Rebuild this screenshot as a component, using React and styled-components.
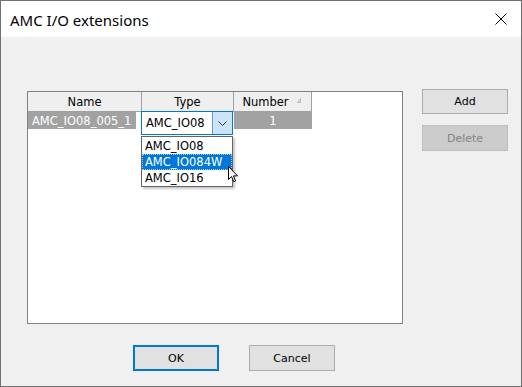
import React from "react";
import styled, { createGlobalStyle } from "styled-components";

const GlobalStyle = createGlobalStyle`
  html, body { margin: 0; padding: 0; background: #ffffff; }
  * { box-sizing: border-box; }
`;

const Frame = styled.div`
  width: 522px;
  height: 387px;
  border: 1px solid #707070;
  display: flex;
  flex-direction: column;
  font-family: "DejaVu Sans", sans-serif;
  font-size: 11.5px;
  color: #000;
  overflow: hidden;
`;

const TitleBar = styled.div`
  height: 36px;
  background: #fff;
  display: flex;
  align-items: center;
  justify-content: space-between;
  padding: 0 14px 0 9px;
`;

const Title = styled.div`
  font-family: "Noto Sans", sans-serif;
  font-size: 15px;
  padding-top: 1px;
`;

const Body = styled.div`
  flex: 1;
  background: #f0f0f0;
  padding: 52px 10px 0 26px;
  display: flex;
  flex-direction: column;
`;

const MainRow = styled.div`
  display: flex;
  align-items: flex-start;
  gap: 19px;
`;

const Grid = styled.div`
  position: relative;
  margin-top: 2px;
  width: 376px;
  height: 233px;
  background: #fff;
  border: 1px solid #828282;
`;

const HeaderRow = styled.div`
  display: flex;
  height: 20px;
`;

const HeaderCell = styled.div`
  position: relative;
  width: ${p => p.$w}px;
  background: #efefef;
  border-right: 1px solid #a0a0a0;
  border-bottom: 1px solid #a0a0a0;
  display: flex;
  align-items: center;
  justify-content: center;
  padding-top: 1px;
  padding-right: ${p => p.$padRight || 0}px;
`;

const HeaderFill = styled.div`
  flex: 1;
  background: #fff;
`;

const SortMark = styled.svg`
  position: absolute;
  right: 9px;
  top: 6px;
`;

const DataRow = styled.div`
  display: flex;
  height: 17px;
`;

const Cell = styled.div`
  width: ${p => p.$w}px;
  background: ${p => (p.$selected ? "#a2a2a2" : "transparent")};
  color: #fff;
  display: flex;
  align-items: center;
  justify-content: ${p => (p.$center ? "center" : "flex-start")};
  padding-left: ${p => (p.$center ? 0 : 4)}px;
  white-space: nowrap;
`;

const Combo = styled.div`
  position: absolute;
  left: 113px;
  top: 19px;
  width: 92px;
  height: 24px;
  background: #fff;
  border: 1px solid #0078d7;
  display: flex;
`;

const ComboText = styled.div`
  flex: 1;
  display: flex;
  align-items: center;
  padding-left: 4px;
`;

const ComboButton = styled.div`
  width: 20px;
  background: #cce4f7;
  border-left: 1px solid #5a9fdc;
  display: flex;
  align-items: center;
  justify-content: center;
`;

const List = styled.div`
  position: absolute;
  left: 113px;
  top: 44px;
  width: 92px;
  height: 51px;
  background: #fff;
  border: 1px solid #646464;
  padding-top: 1px;
  box-shadow: 2px 2px 2px rgba(0, 0, 0, 0.22);
`;

const ListItem = styled.div`
  height: 16px;
  display: flex;
  align-items: center;
  padding-left: 3px;
  background: ${p => (p.$active ? "#0078d7" : "transparent")};
  color: ${p => (p.$active ? "#fff" : "#000")};
  outline: ${p => (p.$active ? "1px dotted #9cc8ef" : "none")};
  outline-offset: -1px;
  white-space: nowrap;
`;

const Cursor = styled.svg`
  position: absolute;
  left: 200px;
  top: 74px;
`;

const SideButtons = styled.div`
  width: 86px;
  display: flex;
  flex-direction: column;
  gap: 11px;
`;

const Button = styled.div`
  width: 86px;
  height: ${p => p.$h || 25}px;
  font-size: 11px;
  display: flex;
  align-items: center;
  justify-content: center;
  background: ${p => (p.$disabled ? "#cccccc" : "#e1e1e1")};
  color: ${p => (p.$disabled ? "#838383" : "#000")};
  border: ${p =>
    p.$default ? "2px solid #0078d7" : p.$disabled ? "1px solid #bfbfbf" : "1px solid #adadad"};
`;

const Footer = styled.div`
  display: flex;
  gap: 30px;
  margin-top: 21px;
  padding-left: 106px;
`;

function App() {
  return (
    <>
      <GlobalStyle />
      <Frame>
        <TitleBar>
          <Title>AMC I/O extensions</Title>
          <svg width="12" height="12" viewBox="0 0 12 12">
            <path d="M0.5 0.5 L11.5 11.5 M11.5 0.5 L0.5 11.5" stroke="#000" strokeWidth="1" fill="none" />
          </svg>
        </TitleBar>
        <Body>
          <MainRow>
            <Grid>
              <HeaderRow>
                <HeaderCell $w={114}>Name</HeaderCell>
                <HeaderCell $w={92}>Type</HeaderCell>
                <HeaderCell $w={78} $padRight={14}>
                  Number
                  <SortMark width="5" height="5" viewBox="0 0 5 5">
                    <path d="M0.5 4.5 L3.5 0.5 L3.5 4.5 Z" stroke="#b8b8b8" fill="none" />
                  </SortMark>
                </HeaderCell>
                <HeaderFill />
              </HeaderRow>
              <DataRow>
                <Cell $w={108} $selected>AMC_IO08_005_1</Cell>
                <Cell $w={98} />
                <Cell $w={78} $selected $center>1</Cell>
              </DataRow>
              <Combo>
                <ComboText>AMC_IO08</ComboText>
                <ComboButton>
                  <svg width="9" height="5" viewBox="0 0 9 5">
                    <path d="M0.5 0.5 L4.5 4.5 L8.5 0.5" stroke="#333" fill="none" />
                  </svg>
                </ComboButton>
              </Combo>
              <List>
                <ListItem>AMC_IO08</ListItem>
                <ListItem $active>AMC_IO084W</ListItem>
                <ListItem>AMC_IO16</ListItem>
              </List>
              <Cursor width="11" height="17" viewBox="0 0 11 17">
                <path
                  d="M0.5 0.5 L0.5 13.5 L3.5 10.5 L5.8 15.8 L7.6 15 L5.4 9.9 L9.5 9.9 Z"
                  fill="#fff"
                  stroke="#000"
                  strokeWidth="1"
                  strokeLinejoin="round"
                />
              </Cursor>
            </Grid>
            <SideButtons>
              <Button>Add</Button>
              <Button $disabled $h={26}>Delete</Button>
            </SideButtons>
          </MainRow>
          <Footer>
            <Button $default $h={26}>OK</Button>
            <Button $h={26}>Cancel</Button>
          </Footer>
        </Body>
      </Frame>
    </>
  );
}

export default App;
